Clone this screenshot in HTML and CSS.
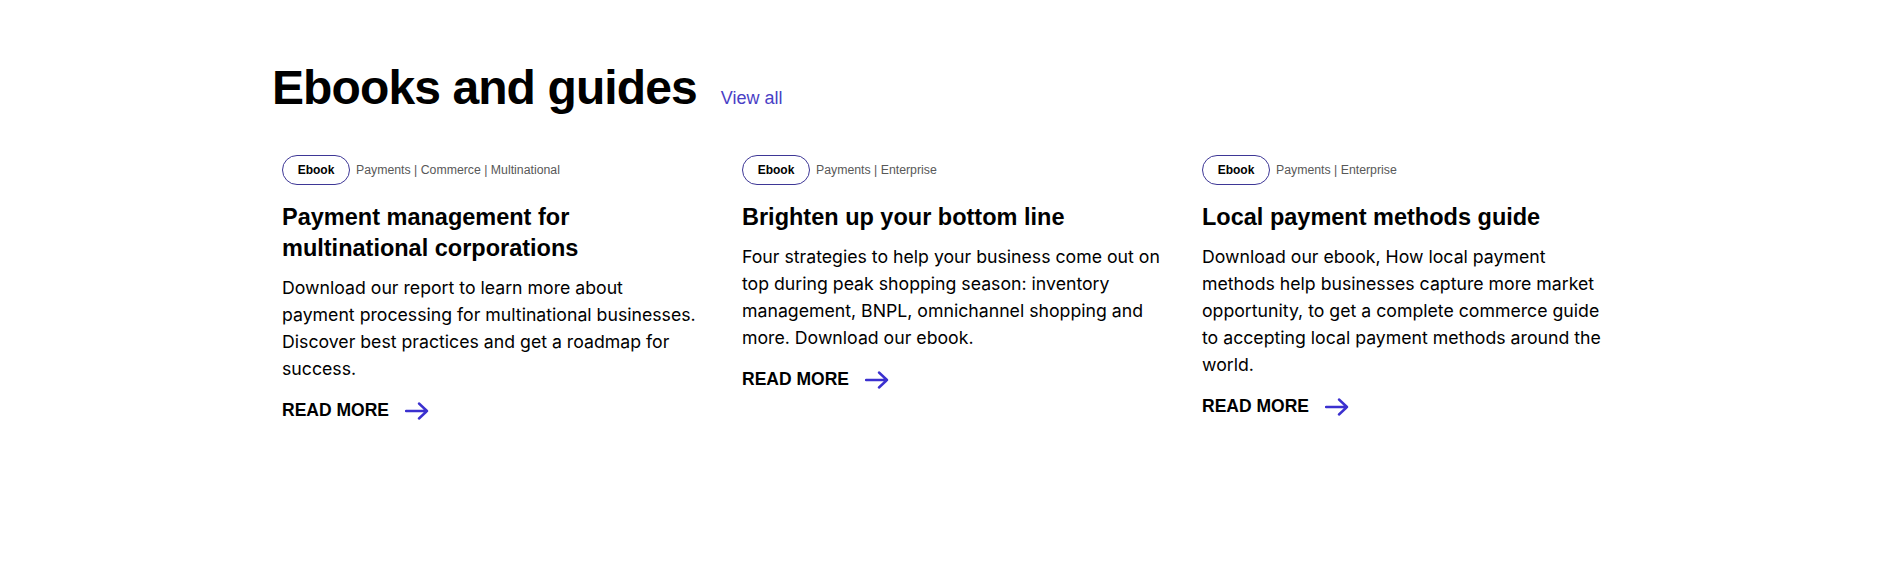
FILE: index.html
```html
<!DOCTYPE html>
<html lang="en">
<head>
<meta charset="utf-8">
<title>Ebooks and guides</title>
<link rel="stylesheet" href="styles.css">
</head>
<body>
<section class="guides">
  <header class="guides-head">
    <h2 class="guides-title">Ebooks and guides</h2>
    <a class="view-all" href="#">View all</a>
  </header>
  <div class="cards">
    <article class="card">
      <div class="meta"><span class="pill">Ebook</span><span class="tags">Payments | Commerce | Multinational</span></div>
      <h3 class="card-title">Payment management for multinational corporations</h3>
      <p class="card-text">Download our report to learn more about<br>payment processing for multinational businesses.<br>Discover best practices and get a roadmap for<br>success.</p>
      <a class="read-more" href="#">READ MORE <svg class="arrow" viewBox="0 0 24 18" width="24" height="18"><path d="M1 9H22M14 1.5L22 9L14 16.5" fill="none" stroke="currentColor" stroke-width="2.4" stroke-linecap="round" stroke-linejoin="round"/></svg></a>
    </article>
    <article class="card">
      <div class="meta"><span class="pill">Ebook</span><span class="tags">Payments | Enterprise</span></div>
      <h3 class="card-title">Brighten up your bottom line</h3>
      <p class="card-text">Four strategies to help your business come out on<br>top during peak shopping season: inventory<br>management, BNPL, omnichannel shopping and<br>more. Download our ebook.</p>
      <a class="read-more" href="#">READ MORE <svg class="arrow" viewBox="0 0 24 18" width="24" height="18"><path d="M1 9H22M14 1.5L22 9L14 16.5" fill="none" stroke="currentColor" stroke-width="2.4" stroke-linecap="round" stroke-linejoin="round"/></svg></a>
    </article>
    <article class="card">
      <div class="meta"><span class="pill">Ebook</span><span class="tags">Payments | Enterprise</span></div>
      <h3 class="card-title">Local payment methods guide</h3>
      <p class="card-text">Download our ebook, How local payment<br>methods help businesses capture more market<br>opportunity, to get a complete commerce guide<br>to accepting local payment methods around the<br>world.</p>
      <a class="read-more" href="#">READ MORE <svg class="arrow" viewBox="0 0 24 18" width="24" height="18"><path d="M1 9H22M14 1.5L22 9L14 16.5" fill="none" stroke="currentColor" stroke-width="2.4" stroke-linecap="round" stroke-linejoin="round"/></svg></a>
    </article>
  </div>
</section>
</body>
</html>
```

FILE: styles.css
```css
* { box-sizing: border-box; }
html, body { margin: 0; background: #fff; }
body {
  font-family: "Liberation Sans", Arial, sans-serif;
  color: #000;
}
.guides {
  width: 1354px;
  margin: 0 auto;
  padding-top: 58px;
}
.guides-head {
  display: flex;
  align-items: baseline;
  gap: 24px;
}
.guides-title {
  margin: 0;
  font-size: 48px;
  line-height: 60px;
  font-weight: 700;
  letter-spacing: -0.9px;
}
.view-all {
  font-size: 18px;
  color: #4a3fc6;
  text-decoration: none;
}
.cards {
  display: grid;
  grid-template-columns: repeat(3, 436px);
  column-gap: 24px;
  padding: 0 10px;
  margin-top: 37px;
  align-items: start;
}
.card { display: flex; flex-direction: column; align-items: flex-start; }
.meta { display: flex; align-items: center; gap: 6px; }
.pill {
  display: inline-flex;
  align-items: center;
  justify-content: center;
  width: 68px;
  height: 30px;
  border: 1px solid #3e3796;
  border-radius: 15px;
  font-size: 12px;
  font-weight: 700;
}
.tags { font-size: 12.3px; color: #585858; }
.card-title {
  margin: 17px 0 0;
  font-size: 23.5px;
  line-height: 31px;
  font-weight: 700;
}
.card-text {
  margin: 10px 0 0;
  font-family: Inter, "Liberation Sans", sans-serif;
  font-size: 17.7px;
  line-height: 27px;
}
.read-more {
  display: inline-flex;
  align-items: center;
  gap: 16px;
  margin-top: 18px;
  font-size: 17.5px;
  font-weight: 700;
  color: #000;
  text-decoration: none;
}
.arrow { color: #3b30cf; }
```
